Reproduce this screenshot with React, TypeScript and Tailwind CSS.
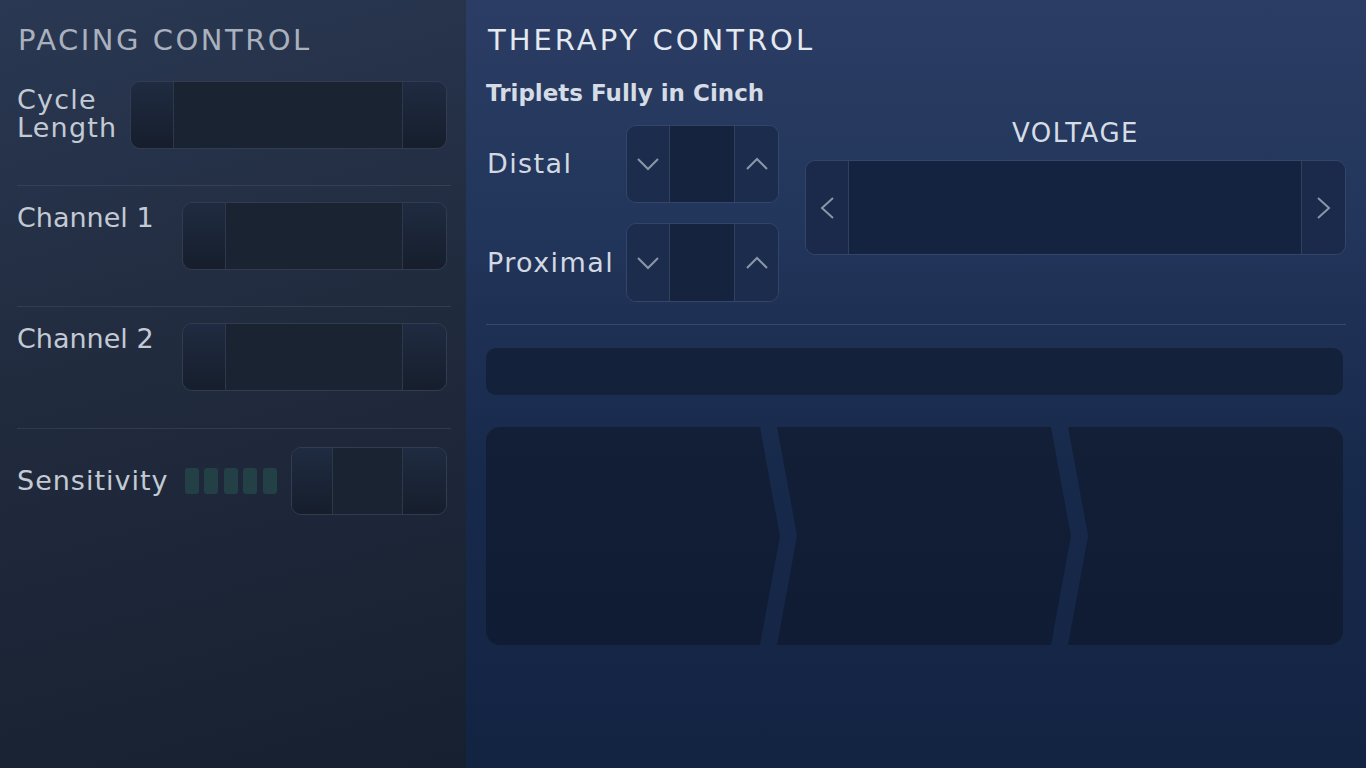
import React from "react";

const FONT = { fontFamily: '"DejaVu Sans", "Noto Sans", sans-serif' };

function Down() {
  return (
    <svg width="24" height="14" viewBox="0 0 24 14" fill="none">
      <polyline points="2,2 12,12 22,2" stroke="#8b96a8" strokeWidth="2" />
    </svg>
  );
}
function Up() {
  return (
    <svg width="24" height="14" viewBox="0 0 24 14" fill="none">
      <polyline points="2,12 12,2 22,12" stroke="#8b96a8" strokeWidth="2" />
    </svg>
  );
}
function Left() {
  return (
    <svg width="15" height="24" viewBox="0 0 15 24" fill="none">
      <polyline points="13,2 2,12 13,22" stroke="#8b96a8" strokeWidth="2" />
    </svg>
  );
}
function Right() {
  return (
    <svg width="15" height="24" viewBox="0 0 15 24" fill="none">
      <polyline points="2,2 13,12 2,22" stroke="#8b96a8" strokeWidth="2" />
    </svg>
  );
}

function DarkStepper({ w, left }: { w: string; left?: string }) {
  return (
    <div className={`${w} h-[68px] shrink-0 flex rounded-[10px] border border-[#313c50] overflow-hidden`}>
      <div className={`${left ?? "w-[43px]"} shrink-0 h-full bg-[linear-gradient(180deg,#1f2b41,#161e2c)] border-r border-[#2d384c]`} />
      <div className="flex-1 h-full bg-[#1a2332]" />
      <div className="w-[44px] shrink-0 h-full bg-[linear-gradient(180deg,#1f2b41,#161e2c)] border-l border-[#2d384c]" />
    </div>
  );
}

function BlueStepper({ h }: { h: string }) {
  return (
    <div className={`w-[153px] ${h} shrink-0 flex rounded-[10px] border border-[#34446a] overflow-hidden`}>
      <div className="w-[43px] h-full bg-[#1c2c4d] border-r border-[#30405f] flex items-center justify-center">
        <Down />
      </div>
      <div className="w-[64px] h-full bg-[#15233f]" />
      <div className="flex-1 h-full bg-[#1c2c4d] border-l border-[#30405f] flex items-center justify-center">
        <Up />
      </div>
    </div>
  );
}

export default function App() {
  return (
    <div className="w-[1366px] h-[768px] flex overflow-hidden" style={FONT}>
      {/* Left panel */}
      <div className="w-[466px] h-full shrink-0 bg-[linear-gradient(165deg,#2a3853_0%,#212b3e_45%,#172030_100%)] pt-[26px] pl-[17px] pr-[15px]">
        <div className="text-[29px] leading-[29px] tracking-[2.5px] text-[#a9b1be] pl-[1px]">PACING CONTROL</div>

        <div className="mt-[26px] flex justify-between items-start pr-[4px]">
          <div className="text-[27px] leading-[28px] text-[#c3cad4] mt-[5px] tracking-[1.2px]">
            Cycle
            <br />
            Length
          </div>
          <DarkStepper w="w-[317px]" />
        </div>
        <div className="mt-[36px] h-px bg-[#353f55]" />

        <div className="mt-[16px] flex justify-between items-start pr-[4px]">
          <div className="text-[27px] leading-[28px] text-[#c3cad4] mt-[2px]">Channel 1</div>
          <DarkStepper w="w-[265px]" />
        </div>
        <div className="mt-[36px] h-px bg-[#333d52]" />

        <div className="mt-[16px] flex justify-between items-start pr-[4px]">
          <div className="text-[27px] leading-[28px] text-[#c3cad4] mt-[2px]">Channel 2</div>
          <DarkStepper w="w-[265px]" />
        </div>
        <div className="mt-[37px] h-px bg-[#313a4f]" />

        <div className="mt-[18px] flex items-center pr-[4px]">
          <div className="text-[27px] leading-[28px] text-[#c3cad4] tracking-[1px]">Sensitivity</div>
          <div className="ml-[16px] flex gap-[5.5px]">
            {[0, 1, 2, 3, 4].map((i) => (
              <div key={i} className="w-[14px] h-[26px] rounded-[3px] bg-[#224045]" />
            ))}
          </div>
          <div className="ml-auto">
            <DarkStepper w="w-[156px]" left="w-[41px]" />
          </div>
        </div>
      </div>

      {/* Right panel */}
      <div className="flex-1 h-full bg-[linear-gradient(180deg,#2b3d64_0%,#22355a_30%,#182a4c_60%,#132342_100%)] pt-[26px] pl-[20px] pr-[20px]">
        <div className="text-[29px] leading-[29px] tracking-[3px] text-[#e4e8ef] pl-[2px]">THERAPY CONTROL</div>

        <div className="flex">
          <div className="w-[293px] shrink-0">
            <div className="mt-[27px] text-[23px] leading-[23px] font-semibold text-[#d6dce5]">
              Triplets Fully in Cinch
            </div>
            <div className="mt-[20px] flex items-center">
              <div className="w-[140px] text-[27px] leading-[28px] text-[#d3d9e2] tracking-[1.4px] pl-[1px]">Distal</div>
              <BlueStepper h="h-[78px]" />
            </div>
            <div className="mt-[20px] flex items-center">
              <div className="w-[140px] text-[27px] leading-[28px] text-[#d3d9e2] tracking-[1.4px] pl-[1px]">Proximal</div>
              <BlueStepper h="h-[79px]" />
            </div>
          </div>
          <div className="ml-[26px] flex-1 pt-[65px]">
            <div className="text-center text-[26px] leading-[26px] tracking-[1.5px] text-[#d6dce5]">VOLTAGE</div>
            <div className="mt-[14px] h-[95px] flex rounded-[10px] border border-[#34456a] overflow-hidden">
              <div className="w-[43px] h-full bg-[#1b2a4a] border-r border-[#30405f] flex items-center justify-center">
                <Left />
              </div>
              <div className="flex-1 h-full bg-[#14233f]" />
              <div className="w-[44px] h-full bg-[#1b2a4a] border-l border-[#30405f] flex items-center justify-center">
                <Right />
              </div>
            </div>
          </div>
        </div>

        <div className="mt-[22px] h-px bg-[#38496a]" />

        <div className="mt-[23px] mr-[3px] h-[47px] rounded-[10px] bg-[#14213b]" />

        <div className="mt-[32px] mr-[3px] h-[218px] flex">
          <div className="w-[294px] shrink-0 h-full rounded-l-[14px] bg-[linear-gradient(180deg,#121f37,#0f1c33)] [clip-path:polygon(0_0,274px_0,294px_50%,274px_100%,0_100%)]" />
          <div className="w-[294px] shrink-0 -ml-[3px] h-full bg-[linear-gradient(180deg,#121f37,#0f1c33)] [clip-path:polygon(0_0,274px_0,294px_50%,274px_100%,0_100%,20px_50%)]" />
          <div className="flex-1 -ml-[3px] h-full rounded-r-[14px] bg-[linear-gradient(180deg,#121f37,#0f1c33)] [clip-path:polygon(0_0,100%_0,100%_100%,0_100%,20px_50%)]" />
        </div>
      </div>
    </div>
  );
}
